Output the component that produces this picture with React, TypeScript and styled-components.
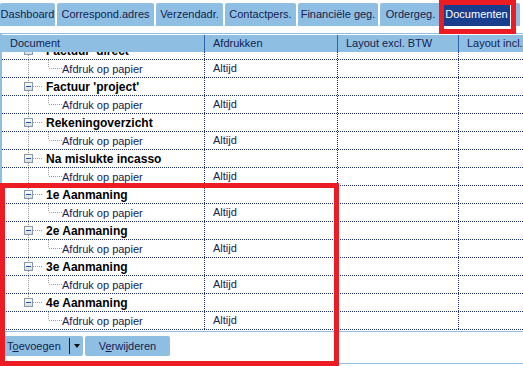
import React from 'react';
import styled, { createGlobalStyle } from 'styled-components';

const BLUE = '#8ebfe3';
const NAVY = '#1c2f6e';
const TEXT = '#142250';

const GlobalStyle = createGlobalStyle`
  body {
    margin: 0;
    background: #fff;
    font-family: "Liberation Sans", Arial, sans-serif;
    font-size: 11px;
    color: ${TEXT};
    overflow: hidden;
  }
`;

const Page = styled.div`
  position: relative;
  width: 523px;
  height: 366px;
  overflow: hidden;
  background: #fff;
`;

const TabBar = styled.div`
  display: flex;
  gap: 2px;
  height: 30px;
  padding-top: 3px;
  box-sizing: border-box;
  white-space: nowrap;
`;

const Tab = styled.div<{ $w: number; $active?: boolean }>`
  flex: none;
  width: ${p => p.$w}px;
  height: 23px;
  line-height: 23px;
  text-align: center;
  border-radius: 2px 2px 0 0;
  background: ${p => (p.$active ? '#1a3e8e' : BLUE)};
  color: ${p => (p.$active ? '#fff' : TEXT)};
  overflow: hidden;
`;

const Grid = styled.div`
  margin-top: 3px;
  border-top: 1px solid ${BLUE};
  border-left: 2px solid ${BLUE};
  border-bottom: 1px solid ${BLUE};
  padding-top: 1px;
`;

const cols = '202px 133px 121px 1fr';

const Header = styled.div`
  display: grid;
  grid-template-columns: ${cols};
  height: 17px;
  background: ${BLUE};
`;

const HeadCell = styled.div<{ $first?: boolean }>`
  padding-left: 8px;
  line-height: 17px;
  white-space: nowrap;
  overflow: hidden;
  border-left: ${p => (p.$first ? 'none' : '1px solid #2d62a6')};
`;

const Body = styled.div`
  height: 279px;
  overflow: hidden;
`;

const Rows = styled.div`
  margin-top: -10px;
`;

const Row = styled.div`
  display: grid;
  grid-template-columns: ${cols};
  height: 18px;
  box-sizing: border-box;
  border-bottom: 1px dotted ${NAVY};
`;

const TreeCell = styled.div`
  display: flex;
  align-items: center;
  height: 17px;
  white-space: nowrap;
`;

const Cell = styled.div`
  padding-left: 8px;
  line-height: 17px;
  border-left: 1px dotted ${NAVY};
  white-space: nowrap;
`;

const GroupLabel = styled.span`
  font-weight: bold;
  font-size: 12px;
  color: #000;
`;

const ItemLabel = styled.span`
  color: ${TEXT};
`;

const Footer = styled.div`
  display: flex;
  gap: 2px;
  height: 32px;
  box-sizing: border-box;
  padding: 4px 0 0 3px;
  border-bottom: 1px solid ${BLUE};
`;

const Button = styled.div<{ $w: number }>`
  display: flex;
  align-items: center;
  justify-content: center;
  width: ${p => p.$w}px;
  height: 20px;
  border-radius: 2px;
  background: ${BLUE};
  color: ${TEXT};
`;

const SplitButton = styled(Button)`
  justify-content: flex-start;
  padding-left: 4px;
  box-sizing: border-box;
`;

const SplitDivider = styled.span`
  width: 1px;
  height: 16px;
  margin: 0 4px 0 8px;
  background: #1a1a1a;
`;

const Arrow = styled.span`
  width: 0;
  height: 0;
  border-left: 3px solid transparent;
  border-right: 3px solid transparent;
  border-top: 4px solid #111;
`;

const Highlight = styled.div<{ $x: number; $y: number; $w: number; $h: number }>`
  position: absolute;
  left: ${p => p.$x}px;
  top: ${p => p.$y}px;
  width: ${p => p.$w}px;
  height: ${p => p.$h}px;
  box-sizing: border-box;
  border: 5px solid #ec1c24;
  pointer-events: none;
`;

const dot = { stroke: '#9a9a9a', strokeWidth: 1, strokeDasharray: '1 1', shapeRendering: 'crispEdges' as const };

function TreeGlyph({ kind, trunkBelow }: { kind: 'group' | 'item'; trunkBelow: boolean }) {
  if (kind === 'group') {
    return (
      <svg width="44" height="17" style={{ flex: 'none' }}>
        <line x1="26.5" y1="0" x2="26.5" y2="4" {...dot} />
        {trunkBelow && <line x1="26.5" y1="13" x2="26.5" y2="17" {...dot} />}
        <line x1="31" y1="8.5" x2="41" y2="8.5" {...dot} />
        <defs>
          <linearGradient id="bx" x1="0" y1="0" x2="0" y2="1">
            <stop offset="0" stopColor="#ffffff" />
            <stop offset="1" stopColor="#d4dbe2" />
          </linearGradient>
        </defs>
        <rect x="22.5" y="4.5" width="8" height="8" fill="url(#bx)" stroke="#8a98a6" shapeRendering="crispEdges" />
        <rect x="24" y="8" width="5" height="1" fill="#2352a8" />
      </svg>
    );
  }
  return (
    <svg width="60" height="17" style={{ flex: 'none' }}>
      {trunkBelow && <line x1="26.5" y1="0" x2="26.5" y2="17" {...dot} />}
      <line x1="46.5" y1="0" x2="46.5" y2="8" {...dot} />
      <line x1="47" y1="8.5" x2="60" y2="8.5" {...dot} />
    </svg>
  );
}

const tabs = [
  { label: 'Dashboard', w: 55 },
  { label: 'Correspond.adres', w: 97 },
  { label: 'Verzendadr.', w: 67 },
  { label: 'Contactpers.', w: 71 },
  { label: 'Financiële geg.', w: 80 },
  { label: 'Ordergeg.', w: 61 },
  { label: 'Documenten', w: 67, active: true },
  { label: '', w: 8 },
];

const groups = [
  "Factuur 'direct'",
  "Factuur 'project'",
  'Rekeningoverzicht',
  'Na mislukte incasso',
  '1e Aanmaning',
  '2e Aanmaning',
  '3e Aanmaning',
  '4e Aanmaning',
];

export default function App() {
  return (
    <>
      <GlobalStyle />
      <Page>
        <TabBar>
          {tabs.map((t, i) => (
            <Tab key={i} $w={t.w} $active={t.active}>
              {t.label}
            </Tab>
          ))}
        </TabBar>
        <Grid>
          <Header>
            <HeadCell $first>Document</HeadCell>
            <HeadCell>Afdrukken</HeadCell>
            <HeadCell>Layout excl. BTW</HeadCell>
            <HeadCell>Layout incl. BTW</HeadCell>
          </Header>
          <Body>
            <Rows>
              {groups.map((g, i) => {
                const last = i === groups.length - 1;
                return (
                  <React.Fragment key={g}>
                    <Row>
                      <TreeCell>
                        <TreeGlyph kind="group" trunkBelow={!last} />
                        <GroupLabel>{g}</GroupLabel>
                      </TreeCell>
                      <Cell />
                      <Cell />
                      <Cell />
                    </Row>
                    <Row>
                      <TreeCell>
                        <TreeGlyph kind="item" trunkBelow={!last} />
                        <ItemLabel>Afdruk op papier</ItemLabel>
                      </TreeCell>
                      <Cell>Altijd</Cell>
                      <Cell />
                      <Cell />
                    </Row>
                  </React.Fragment>
                );
              })}
            </Rows>
          </Body>
        </Grid>
        <Footer>
          <SplitButton $w={80}>
            <span>
              T<u>o</u>evoegen
            </span>
            <SplitDivider />
            <Arrow />
          </SplitButton>
          <Button $w={85}>
            <span>
              V<u>e</u>rwijderen
            </span>
          </Button>
        </Footer>
        <Highlight $x={439} $y={0} $w={77} $h={34} />
        <Highlight $x={0} $y={183} $w={339} $h={183} />
      </Page>
    </>
  );
}
